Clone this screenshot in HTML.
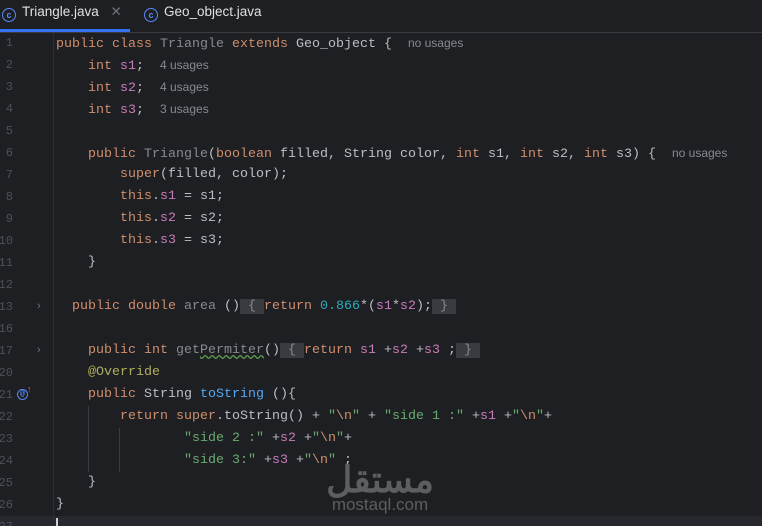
<!DOCTYPE html>
<html style="overflow:hidden;height:526px"><head><meta charset="utf-8"><style>
body{margin:0;width:762px;height:526px;background:#1e1f22;overflow:hidden;position:relative;font-family:"Liberation Mono",monospace}
.tabs{position:absolute;left:0;top:0;width:762px;height:32px;border-bottom:1px solid #393b40;font-family:"Liberation Sans",sans-serif;font-size:13.5px;color:#dfe1e5}
.tab{position:absolute;top:0;height:32px;line-height:24px}
.ci{display:inline-block;width:12px;height:12px;border:1.5px solid #548af7;border-radius:50%;color:#548af7;font-size:9px;line-height:12px;text-align:center;vertical-align:-2px;margin-right:6px;font-weight:bold}
.ul{position:absolute;left:0;top:29px;width:130px;height:3px;background:#3574f0}
.gut{position:absolute;left:53px;top:33px;width:1px;height:493px;background:#2b2d30}
.ln{position:absolute;left:-3px;width:16px;text-align:right;font-size:12px;color:#4b5059;line-height:22px}
.l{position:absolute;left:56px;font-size:13.33px;line-height:22px;white-space:pre;color:#bcbec4}
.k{color:#cf8e6d}.f{color:#c77dbb}.m{color:#56a8f5}.s{color:#6aab73}.n{color:#2aacb8}.g{color:#868a91}.a{color:#b3ae60}
.h{font-family:"Liberation Sans",sans-serif;font-size:12px;color:#868a91}
.fb{background:#393b40;color:#868a91}
.cur{position:absolute;left:0;top:516px;width:762px;height:10px;background:#26282e}
.arr{position:absolute;left:37px;color:#6f737a;font-size:11px;font-family:"Liberation Sans",sans-serif}
.ig{position:absolute;width:1px;background:#393b40}
</style></head><body>
<div class="tabs">
<div class="tab" style="left:2px;top:0"><span class="ci">c</span>Triangle.java <span style="color:#6f737a;margin-left:8px">✕</span></div>
<div class="tab" style="left:144px"><span class="ci">c</span>Geo_object.java</div>
<div class="ul"></div>
</div>
<div class="cur"></div>
<div class="gut"></div>
<div class="ig" style="left:88px;top:406px;height:66px"></div>
<div class="ig" style="left:119px;top:428px;height:44px"></div>
<div class="ln" style="top:32px">1</div><div class="ln" style="top:54px">2</div><div class="ln" style="top:76px">3</div><div class="ln" style="top:98px">4</div><div class="ln" style="top:120px">5</div><div class="ln" style="top:142px">6</div><div class="ln" style="top:164px">7</div><div class="ln" style="top:186px">8</div><div class="ln" style="top:208px">9</div><div class="ln" style="top:230px">10</div><div class="ln" style="top:252px">11</div><div class="ln" style="top:274px">12</div><div class="ln" style="top:296px">13</div><div class="ln" style="top:318px">16</div><div class="ln" style="top:340px">17</div><div class="ln" style="top:362px">20</div><div class="ln" style="top:384px">21</div><div class="ln" style="top:406px">22</div><div class="ln" style="top:428px">23</div><div class="ln" style="top:450px">24</div><div class="ln" style="top:472px">25</div><div class="ln" style="top:494px">26</div><div class="ln" style="top:516px;height:10px;overflow:hidden">27</div>
<div class="arr" style="top:300px">›</div><div class="arr" style="top:344px">›</div>
<div style="position:absolute;left:17px;top:389px;width:9px;height:9px;border:1.5px solid #548af7;border-radius:50%;color:#548af7;font-size:8px;line-height:9px;text-align:center;font-weight:bold">@</div>
<div style="position:absolute;left:27px;top:384px;color:#e55d5d;font-size:9px;font-family:'Liberation Sans'">↑</div>
<div class="l" style="top:32px"><span class="k">public class </span><span class="g">Triangle </span><span class="k">extends </span>Geo_object {  <span class="h">no usages</span></div>
<div class="l" style="top:54px">    <span class="k">int </span><span class="f">s1</span>;  <span class="h">4 usages</span></div>
<div class="l" style="top:76px">    <span class="k">int </span><span class="f">s2</span>;  <span class="h">4 usages</span></div>
<div class="l" style="top:98px">    <span class="k">int </span><span class="f">s3</span>;  <span class="h">3 usages</span></div>
<div class="l" style="top:142px">    <span class="k">public </span><span class="g">Triangle</span>(<span class="k">boolean </span>filled, String color, <span class="k">int </span>s1, <span class="k">int </span>s2, <span class="k">int </span>s3) {  <span class="h">no usages</span></div>
<div class="l" style="top:164px">        <span class="k">super</span>(filled, color);</div>
<div class="l" style="top:186px">        <span class="k">this</span>.<span class="f">s1</span> = s1;</div>
<div class="l" style="top:208px">        <span class="k">this</span>.<span class="f">s2</span> = s2;</div>
<div class="l" style="top:230px">        <span class="k">this</span>.<span class="f">s3</span> = s3;</div>
<div class="l" style="top:252px">    }</div>
<div class="l" style="top:296px">  <span class="k">public double </span><span class="g">area</span> ()<span class="fb"> { </span><span class="k">return </span><span class="n">0.866</span>*(<span class="f">s1</span>*<span class="f">s2</span>);<span class="fb"> } </span></div>
<div class="l" style="top:340px">    <span class="k">public int </span><span class="g">get<span style="text-decoration:underline wavy #5f9c50">Permiter</span></span>()<span class="fb"> { </span><span class="k">return </span><span class="f">s1</span> +<span class="f">s2</span> +<span class="f">s3</span> ;<span class="fb"> } </span></div>
<div class="l" style="top:362px">    <span class="a">@Override</span></div>
<div class="l" style="top:384px">    <span class="k">public </span>String <span class="m">toString</span> (){</div>
<div class="l" style="top:406px">        <span class="k">return super</span>.toString() + <span class="s">"</span><span class="k">\n</span><span class="s">"</span> + <span class="s">"side 1 :"</span> +<span class="f">s1</span> +<span class="s">"</span><span class="k">\n</span><span class="s">"</span>+</div>
<div class="l" style="top:428px">                <span class="s">"side 2 :"</span> +<span class="f">s2</span> +<span class="s">"</span><span class="k">\n</span><span class="s">"</span>+</div>
<div class="l" style="top:450px">                <span class="s">"side 3:"</span> +<span class="f">s3</span> +<span class="s">"</span><span class="k">\n</span><span class="s">"</span> ;</div>
<div class="l" style="top:472px">    }</div>
<div class="l" style="top:494px">}</div>
<div style="position:absolute;left:56px;top:518px;width:2px;height:8px;background:#ced0d6"></div>
<div style="position:absolute;left:320px;top:460px;width:120px;text-align:center;color:#5d5e61;font-family:'Liberation Sans','Noto Sans CJK SC',sans-serif;font-weight:bold;font-size:36px;line-height:40px">مستقل</div>
<div style="position:absolute;left:320px;top:496px;width:120px;text-align:center;color:#5d5e61;font-family:'Liberation Sans',sans-serif;font-size:17px;line-height:18px">mostaql.com</div>
</body></html>
